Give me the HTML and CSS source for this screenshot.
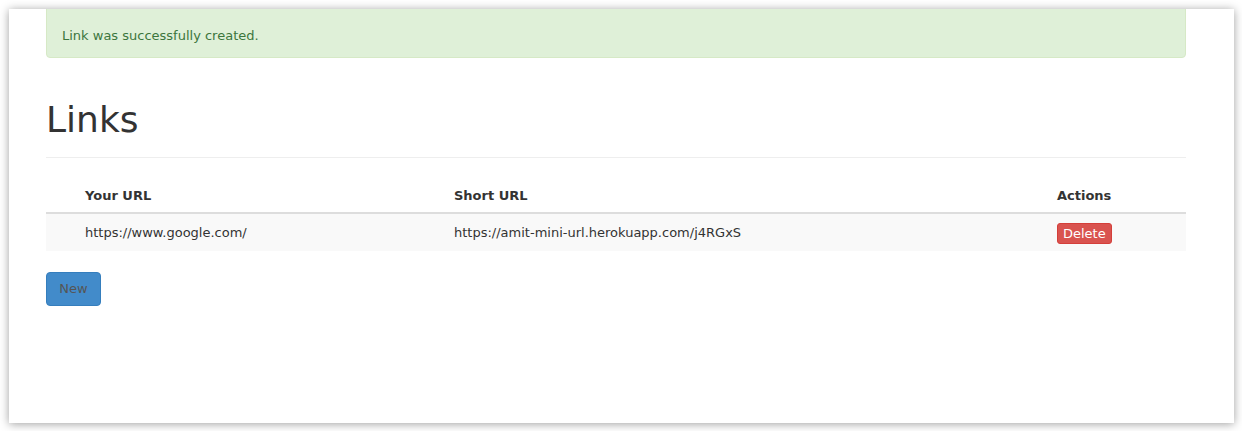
FILE: index.html
```html
<!DOCTYPE html>
<html>
<head>
<meta charset="utf-8">
<link rel="stylesheet" href="styles.css">
</head>
<body>
<div class="frame">
  <div class="container">
    <div class="alert">Link was successfully created.</div>
    <div class="page-header"><h1>Links</h1></div>
    <table class="table">
      <thead>
        <tr>
          <th class="c0"></th>
          <th class="c1">Your URL</th>
          <th class="c2">Short URL</th>
          <th class="c3">Actions</th>
        </tr>
      </thead>
      <tbody>
        <tr>
          <td class="c0"></td>
          <td class="c1">https://www.google.com/</td>
          <td class="c2">https://amit-mini-url.herokuapp.com/j4RGxS</td>
          <td class="c3"><span class="btn-del">Delete</span></td>
        </tr>
      </tbody>
    </table>
    <div class="btn-new">New</div>
  </div>
</div>
</body>
</html>
```
FILE: styles.css
```css
html, body {
  margin: 0;
  padding: 0;
  background: #ffffff;
  width: 1242px;
  height: 431px;
  overflow: hidden;
  font-family: "DejaVu Sans", Verdana, sans-serif;
  color: #333333;
}
.frame {
  position: relative;
  margin: 9px 0 0 9px;
  width: 1225px;
  height: 414px;
  background: #ffffff;
  box-shadow: 0 1px 9px rgba(0, 0, 0, 0.38);
  overflow: hidden;
}
.container {
  padding-left: 37px;
  width: 1140px;
}
.alert {
  margin-top: -20px;
  height: 69px;
  box-sizing: border-box;
  padding: 38px 15px 0 15px;
  background: #dff0d8;
  border: 1px solid #d6e9c6;
  border-radius: 4px;
  color: #3c763d;
  font-size: 13px;
  line-height: 15px;
}
.page-header {
  margin-top: 40px;
  border-bottom: 1px solid #eeeeee;
  padding-bottom: 15px;
}
.page-header h1 {
  margin: 0;
  font-weight: normal;
  font-size: 36px;
  line-height: 44px;
  color: #333333;
}
.table {
  margin-top: 20px;
  width: 1140px;
  border-collapse: collapse;
  table-layout: fixed;
  font-size: 13px;
}
.table th {
  text-align: left;
  font-weight: bold;
  padding: 9px 8px 8px 8px;
  line-height: 17px;
  border-bottom: 2px solid #dddddd;
  color: #333333;
}
.table td {
  padding: 0 8px;
  height: 38px;
  box-sizing: border-box;
  line-height: 21px;
  background: #f9f9f9;
  color: #333333;
  vertical-align: middle;
}
.table .c0 { width: 31px; padding: 0; }
.table .c1 { width: 353px; }
.table .c2 { width: 587px; }
.table .c3 { width: auto; }
.btn-del {
  display: inline-block;
  vertical-align: middle;
  background: #d9534f;
  border: 1px solid #d43f3a;
  border-radius: 3px;
  color: #ffffff;
  font-size: 13px;
  line-height: 17px;
  padding: 1px 5px;
}
.btn-new {
  margin-top: 21px;
  display: inline-block;
  width: 55px;
  height: 34px;
  box-sizing: border-box;
  background: #428bca;
  border: 1px solid #357ebd;
  border-radius: 4px;
  color: #555555;
  font-size: 13px;
  line-height: 32px;
  text-align: center;
}
```
